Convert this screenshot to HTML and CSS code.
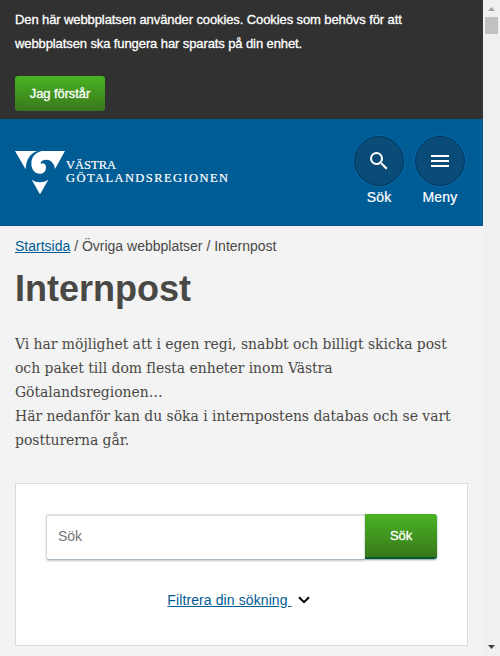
FILE: index.html
```html
<!DOCTYPE html>
<html lang="sv">
<head>
<meta charset="utf-8">
<title>Internpost</title>
<link rel="stylesheet" href="styles.css">
</head>
<body>
<div class="page">
  <section class="cookies">
    <p>Den här webbplatsen använder cookies. Cookies som behövs för att<br>webbplatsen ska fungera har sparats på din enhet.</p>
    <button class="accept">Jag förstår</button>
  </section>
  <header class="header">
    <div class="logo">
      <svg class="mark" viewBox="45 63 150 130">
        <path d="M45 63H113C92 68 78 88 77 118Z"/>
        <path d="M125 63H195L165 117C163 98 150 88 137 89C126 90 121 96 122 102C127 97 139 101 138 113C137 126 128 132 118 131C103 130 93 116 94 99C95 80 106 68 125 63Z"/>
        <path d="M95 149C110 159 130 159 145 149L120 193Z"/>
      </svg>
      <svg class="wordmark" viewBox="0 0 164 30">
        <text x="1" y="13" textLength="50">VÄSTRA</text>
        <text x="1" y="25.7" textLength="162">GÖTALANDSREGIONEN</text>
      </svg>
    </div>
    <nav class="actions">
      <a class="action"><span class="round"><svg viewBox="0 0 24 24" class="icon"><path d="M15.5 14h-.79l-.28-.27A6.47 6.47 0 0 0 16 9.5 6.5 6.5 0 1 0 9.5 16c1.61 0 3.09-.59 4.23-1.57l.27.28v.79l5 4.99L20.49 19l-4.99-5zm-6 0a4.5 4.5 0 1 1 0-9 4.5 4.5 0 0 1 0 9z"/></svg></span>Sök</a>
      <a class="action"><span class="round"><svg viewBox="0 0 24 24" class="icon"><path d="M3 18h18v-2H3v2zm0-5h18v-2H3v2zm0-7v2h18V6H3z"/></svg></span>Meny</a>
    </nav>
  </header>
  <main class="main">
    <div class="crumbs"><a>Startsida</a> / Övriga webbplatser / Internpost</div>
    <h1>Internpost</h1>
    <p class="intro">Vi har möjlighet att i egen regi, snabbt och billigt skicka post<br>och paket till dom flesta enheter inom Västra<br>Götalandsregionen…<br>Här nedanför kan du söka i internpostens databas och se vart<br>postturerna går.</p>
    <section class="panel">
      <form class="search">
        <input type="text" placeholder="Sök">
        <button type="button">Sök</button>
      </form>
      <div class="filter"><a>Filtrera din sökning&nbsp;</a><svg viewBox="0 0 12 8"><path d="M1 1.2L6 6.2L11 1.2"/></svg></div>
    </section>
  </main>
</div>
<div class="scrollbar">
  <svg viewBox="0 0 17 17"><path class="up" d="M5 11L8.5 7L12 11Z"/></svg>
  <div class="thumb"></div>
  <svg viewBox="0 0 17 17"><path class="down" d="M5 6L8.5 10L12 6Z"/></svg>
</div>
</body>
</html>
```

FILE: styles.css
```css
* { box-sizing: border-box; }
body {
  margin: 0;
  height: 656px;
  overflow: hidden;
  display: flex;
  background: #f3f3f3;
  color: #4a4845;
  font-family: "Liberation Sans", Arial, sans-serif;
}
.page { width: 483px; }
button { border: 0; padding: 0; font-family: inherit; color: #fff; }
.cookies {
  height: 119px;
  padding: 8px 15px 0;
  background: #313131;
  color: #fff;
}
.cookies p {
  margin: 0 0 20px;
  font-size: 13px;
  letter-spacing: -0.1px;
  line-height: 24px;
  white-space: nowrap;
  -webkit-text-stroke: 0.3px #fff;
}
.accept {
  display: block;
  width: 90px;
  height: 35px;
  border-radius: 3px;
  font-size: 13px;
  letter-spacing: -0.1px;
  -webkit-text-stroke: 0.3px #fff;
  background: linear-gradient(#4ab422, #39771c);
}
.header {
  height: 107px;
  background: #005c95;
  border-bottom: 1px solid #00528b;
  display: flex;
  justify-content: space-between;
  padding: 17px 18px 0 15px;
}
.logo { display: flex; padding-top: 15px; }
.mark { width: 50px; height: 43.33px; fill: #fff; }
.wordmark {
  width: 164px;
  height: 30px;
  margin-top: 5px;
  overflow: visible;
  fill: #fff;
  stroke: #fff;
  stroke-width: 0.2px;
  font-family: "Liberation Serif", serif;
  font-size: 12.5px;
}
.actions { display: flex; gap: 11px; }
.action {
  width: 50px;
  text-align: center;
  font-size: 14px;
  letter-spacing: 0.2px;
  line-height: 22px;
  color: #fff;
  -webkit-text-stroke: 0.2px #fff;
}
.round {
  display: flex;
  align-items: center;
  justify-content: center;
  width: 50px;
  height: 50px;
  border-radius: 50%;
  background: #094c78;
  border: 1px solid #063655;
  box-shadow: 0 0 0 1px #0068ad;
}
.icon { width: 24px; height: 24px; fill: #fff; }
.main { padding: 10px 15px 0; }
.crumbs { font-size: 14px; line-height: 20px; }
a { color: inherit; }
.crumbs a, .filter a { color: #005c95; text-decoration: underline; }
h1 { margin: 12px 0 0; font-size: 36px; line-height: 42px; }
.intro {
  margin: 22px 0 31px;
  font-family: "DejaVu Serif Condensed", "DejaVu Serif", serif;
  font-stretch: condensed;
  font-size: 15.5px;
  letter-spacing: -0.03px;
  line-height: 24px;
  white-space: nowrap;
}
.panel {
  height: 163px;
  border: 1px solid #dcdcdc;
  background: #fff;
  padding: 30px;
}
.search { display: flex; width: 391px; height: 46px; margin: 0; }
.search input {
  width: 320px;
  height: 46px;
  padding: 0 11px 3px;
  border: 1px solid #d5dade;
  border-top: 2px solid #e1e1e1;
  border-bottom-color: #a9b8c3;
  border-right: 0;
  border-radius: 3px 0 0 3px;
  box-shadow: 0 1px 2px rgba(0, 50, 80, .25);
  font: 14px "Liberation Sans", Arial, sans-serif;
}
.search input::placeholder { color: #757575; }
.search button {
  width: 72px;
  height: 45px;
  border-radius: 0 3px 3px 0;
  border-bottom: 2px solid #075b2b;
  background: linear-gradient(#4ab422, #39771c);
  box-shadow: 0 1px 2px rgba(0, 50, 80, .5);
  font-size: 13px;
  -webkit-text-stroke: 0.3px #fff;
}
.filter {
  display: flex;
  justify-content: center;
  align-items: center;
  gap: 6px;
  margin: 30px 6px 0 0;
  font-size: 14px;
  letter-spacing: 0.1px;
  line-height: 20px;
}
.filter svg { width: 12px; height: 8px; fill: none; stroke: #000; stroke-width: 2; }
.scrollbar {
  width: 17px;
  height: 656px;
  background: #f0f0f0;
  display: flex;
  flex-direction: column;
  align-items: center;
}
.scrollbar > svg { width: 17px; height: 17px; }
.up { fill: #a3a3a3; }
.down { fill: #404040; }
.thumb { width: 13px; height: 17px; margin-bottom: auto; background: #c1c1c1; }
```
